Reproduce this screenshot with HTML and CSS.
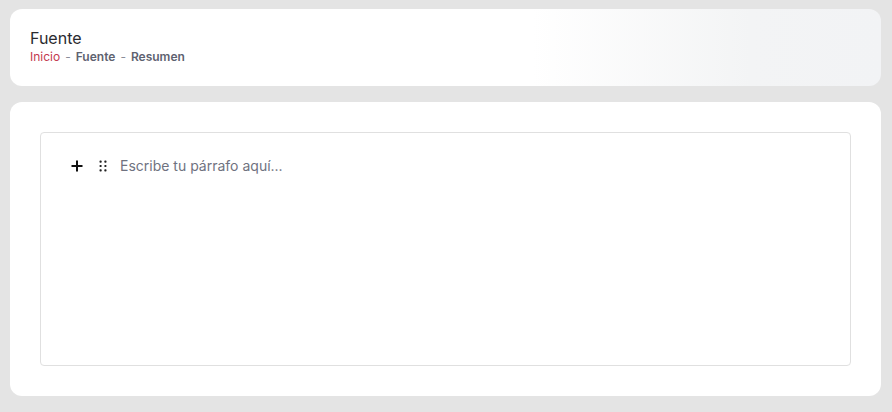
FILE: index.html
```html
<!DOCTYPE html>
<html lang="es">
<head>
<meta charset="utf-8">
<link rel="stylesheet" href="styles.css">
</head>
<body>
<div class="page">
  <div class="card header">
    <h1 class="title">Fuente</h1>
    <div class="crumbs">
      <span class="crumb-home">Inicio</span>
      <span class="sep">-</span>
      <span class="crumb">Fuente</span>
      <span class="sep">-</span>
      <span class="crumb">Resumen</span>
    </div>
  </div>
  <div class="card main">
    <div class="editor">
      <div class="block">
        <svg class="plus" width="14" height="14" viewBox="0 0 14 14"><path d="M7 1.5v11M1.5 7h11" stroke="#111" stroke-width="2" fill="none"/></svg>
        <svg class="drag" width="8" height="12" viewBox="0 0 8 12"><g fill="#222"><rect x="0.5" y="0.5" width="2.2" height="2.2" rx="0.8"/><rect x="5.3" y="0.5" width="2.2" height="2.2" rx="0.8"/><rect x="0.5" y="4.9" width="2.2" height="2.2" rx="0.8"/><rect x="5.3" y="4.9" width="2.2" height="2.2" rx="0.8"/><rect x="0.5" y="9.3" width="2.2" height="2.2" rx="0.8"/><rect x="5.3" y="9.3" width="2.2" height="2.2" rx="0.8"/></g></svg>
        <span class="placeholder">Escribe tu párrafo aquí...</span>
      </div>
    </div>
  </div>
</div>
</body>
</html>
```

FILE: styles.css
```css
html, body {
  margin: 0;
  padding: 0;
  background: #e4e4e4;
  font-family: Inter, "Noto Sans", sans-serif;
}
.page {
  padding: 9px 11px 16px 10px;
  display: flex;
  flex-direction: column;
  gap: 16px;
}
.card {
  background: #fff;
  border-radius: 12px;
}
.header {
  height: 77px;
  box-sizing: border-box;
  padding: 19px 20px 0 20px;
  background: linear-gradient(90deg, #ffffff 0%, #ffffff 60%, #f3f4f5 85%, #f2f3f5 100%);
}
.title {
  margin: 0;
  font-size: 16px;
  line-height: 20px;
  font-weight: 400;
  color: #2a2a30;
}
.crumbs {
  margin-top: 1px;
  font-size: 12px;
  line-height: 16px;
  display: flex;
  gap: 5px;
}
.crumb-home {
  color: #c4394f;
}
.sep {
  color: #8a8d99;
}
.crumb {
  color: #5e6270;
  font-weight: 600;
}
.main {
  padding: 30px;
}
.editor {
  height: 234px;
  box-sizing: border-box;
  border: 1px solid #e0e0e0;
  border-radius: 4px;
  padding: 25px 0 0 29px;
}
.block {
  display: flex;
  align-items: center;
  height: 16px;
}
.plus {
  margin-right: 15px;
}
.drag {
  margin-right: 13px;
}
.placeholder {
  font-size: 14px;
  line-height: 16px;
  color: #6f7280;
}
```
